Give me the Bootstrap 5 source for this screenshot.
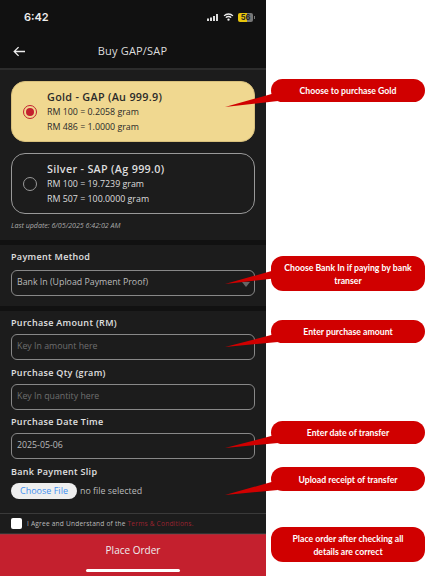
<!DOCTYPE html>
<html lang="en">
<head>
    <meta charset="UTF-8">
    <meta name="viewport" content="width=device-width, initial-scale=1.0">
    <title>Buy GAP/SAP</title>
    <link href="https://cdn.jsdelivr.net/npm/bootstrap@5.3.0/dist/css/bootstrap.min.css" rel="stylesheet">
    <style>
        html, body { height: 576px; overflow: hidden; }
        body { background: #fff; font-family: "Open Sans", sans-serif; position: relative; }

        .phone { width: 266px; height: 576px; background: #111; color: #e6e6e6; }

        .status-bar { height: 34px; padding: 0 13px 0 24px; }
        .status-time { font-size: 11px; font-weight: 600; color: #eee; font-family: Inter, sans-serif; }
        .batt { width: 15px; height: 9px; background: linear-gradient(90deg, #e8c60c 62%, #777 62%); border-radius: 2px; color: #222; font-size: 7.5px; font-weight: 700; line-height: 9px; text-align: center; font-family: Inter, sans-serif; position: relative; }
        .batt::after { content: ""; position: absolute; right: -2px; top: 3px; width: 1px; height: 3px; background: #777; }

        .app-head { height: 36px; border-bottom: 2px solid #2c2c2c; padding: 0 13px; position: relative; }
        .app-head-title { font-size: 11px; letter-spacing: .2px; color: #ddd; width: 100%; text-align: center; padding-right: 16px; padding-left: 2px; }

        .block { background: #1c1c1c; padding: 0 11px; }
        .block-rates { height: 170px; padding-top: 11px; margin-bottom: 5px; }
        .block-pay { height: 61px; padding-top: 5px; margin-bottom: 5px; }
        .block-pay .field-label { margin-bottom: 6.5px; }
        .block-form { height: 202px; padding-top: 5px; }

        .rate-box { height: 61px; border: 1px solid #999; border-radius: 14px; color: #ddd; margin-bottom: 11px; padding-left: 11px; gap: 10px; }
        .rate-on { background: #f0d890; border-color: #d8c07c; color: #2a2a2a; }
        .rate-name { font-size: 10.8px; font-weight: 600; letter-spacing: .3px; line-height: 16px; }
        .rate-line { font-size: 8.85px; line-height: 15px; }
        .radio-dot { width: 14px; height: 14px; border: 1.5px solid #999; border-radius: 50%; flex: none; }
        .rate-on .radio-dot { border-color: #c4202e; padding: 2px; }
        .radio-dot i { display: block; width: 100%; height: 100%; border-radius: 50%; background: #c4202e; }
        .update-note { font-size: 7.1px; font-style: italic; color: #aaa; margin-top: -5px; }

        .field-label { font-size: 9px; font-weight: 600; letter-spacing: .32px; color: #e0e0e0; line-height: 13px; margin: 0 0 5px; display: block; }
        .field-box { height: 26px; border: 1px solid #888; border-radius: 6px; font-size: 8.8px; padding: 0 5px; color: #bbb; margin-bottom: 5.5px; position: relative; }
        .field-hint { color: #6f6f6f; }
        .select-caret { position: absolute; right: 4px; top: 11px; width: 0; height: 0; border: 4px solid transparent; border-top: 5px solid #666; border-bottom: 0; }

        .file-row { margin-top: 3px; font-size: 8.9px; color: #bbb; gap: 3px; }
        .file-btn { background: #eee; color: #3f8fef; font-size: 9px; border-radius: 9px; width: 66px; height: 16px; line-height: 16px; text-align: center; }

        .agree-row { height: 21px; background: #1c1c1c; border-top: 1px solid #3a3a3a; border-bottom: 1px solid #333; padding-left: 11px; gap: 5px; font-size: 6.6px; letter-spacing: .2px; color: #bbb; }
        .agree-box { width: 11px; height: 11px; background: #fff; border-radius: 2px; flex: none; }
        .agree-link { color: #9a2330; }

        .order-btn { height: 42px; background: #c4202e; color: #eee; font-size: 10px; position: relative; padding-bottom: 10px; border-top: 1px solid #a5303a; }
        .home-bar { position: absolute; left: 86px; right: 86px; bottom: 4px; height: 3px; border-radius: 2px; background: #fff; }

        .tip { position: absolute; background: #d00000; color: #fff; left: 271px; width: 154px; border-radius: 12px; font-family: Lato, sans-serif; font-weight: 700; font-size: 8.7px; line-height: 13px; text-align: center; padding: 0 12px; }
        .tails { position: absolute; left: 0; top: 0; }
    </style>
</head>
<body>
    <div class="phone d-flex flex-column">
        <div class="status-bar d-flex justify-content-between align-items-center">
            <span class="status-time">6:42</span>
            <div class="d-flex align-items-center gap-1">
                <svg width="12" height="7" viewBox="0 0 12 7" fill="#ddd"><rect x="0" y="4.5" width="2" height="2.5"/><rect x="3" y="3.5" width="2" height="3.5"/><rect x="6" y="2" width="2" height="5"/><rect x="9" y="0" width="2" height="7"/></svg>
                <svg width="11" height="8" viewBox="0 0 12 9" fill="none" stroke="#eee" stroke-width="1.5"><path d="M1 3.2a7 7 0 0 1 10 0"/><path d="M3 5.2a4.2 4.2 0 0 1 6 0"/><circle cx="6" cy="7.4" r=".6" fill="#eee"/></svg>
                <div class="batt">56</div>
            </div>
        </div>
        <div class="app-head d-flex align-items-center">
            <svg class="flex-shrink-0" width="13" height="11" viewBox="0 0 14 12" fill="none" stroke="#eee" stroke-width="1.4"><path d="M13 6H1.5M6 1.2 1.2 6 6 10.8"/></svg>
            <div class="app-head-title">Buy GAP/SAP</div>
        </div>

        <div class="block block-rates">
            <div class="rate-box rate-on d-flex align-items-center">
                <div class="radio-dot"><i></i></div>
                <div>
                    <div class="rate-name">Gold - GAP (Au 999.9)</div>
                    <div class="rate-line">RM 100 = 0.2058 gram</div>
                    <div class="rate-line">RM 486 = 1.0000 gram</div>
                </div>
            </div>
            <div class="rate-box d-flex align-items-center">
                <div class="radio-dot"></div>
                <div>
                    <div class="rate-name">Silver - SAP (Ag 999.0)</div>
                    <div class="rate-line">RM 100 = 19.7239 gram</div>
                    <div class="rate-line">RM 507 = 100.0000 gram</div>
                </div>
            </div>
            <div class="update-note">Last update: 6/05/2025 6:42:02 AM</div>
        </div>

        <div class="block block-pay">
            <label class="field-label">Payment Method</label>
            <div class="field-box d-flex align-items-center">Bank In (Upload Payment Proof)<span class="select-caret"></span></div>
        </div>

        <div class="block block-form">
            <label class="field-label">Purchase Amount (RM)</label>
            <div class="field-box d-flex align-items-center field-hint">Key In amount here</div>
            <label class="field-label">Purchase Qty (gram)</label>
            <div class="field-box d-flex align-items-center field-hint">Key In quantity here</div>
            <label class="field-label">Purchase Date Time</label>
            <div class="field-box d-flex align-items-center">2025-05-06</div>
            <label class="field-label">Bank Payment Slip</label>
            <div class="file-row d-flex align-items-center">
                <span class="file-btn">Choose File</span>
                <span>no file selected</span>
            </div>
        </div>

        <div class="agree-row d-flex align-items-center">
            <span class="agree-box"></span>
            <span>I Agree and Understand of the <span class="agree-link">Terms &amp; Conditions.</span></span>
        </div>

        <div class="order-btn d-flex justify-content-center align-items-center">
            Place Order
            <div class="home-bar"></div>
        </div>
    </div>

    <!-- callouts, placed over the screenshot -->
    <svg class="tails" width="425" height="576" fill="#d00000">
        <polygon points="225,107 275,93 278,101"/>
        <polygon points="225,284 275,270 278,278"/>
        <polygon points="225,347 275,334 278,342"/>
        <polygon points="225,448 275,435 278,443"/>
        <polygon points="225,495 275,481 278,490"/>
    </svg>
    <div class="tip d-flex align-items-center justify-content-center" style="top:79px;height:23px">Choose to purchase Gold</div>
    <div class="tip d-flex align-items-center justify-content-center" style="top:256px;height:35px">Choose Bank In if paying by bank transer</div>
    <div class="tip d-flex align-items-center justify-content-center" style="top:320px;height:23px">Enter purchase amount</div>
    <div class="tip d-flex align-items-center justify-content-center" style="top:421px;height:23px">Enter date of transfer</div>
    <div class="tip d-flex align-items-center justify-content-center" style="top:467px;height:24px">Upload receipt of transfer</div>
    <div class="tip d-flex align-items-center justify-content-center" style="top:527px;height:35px">Place order after checking all details are correct</div>

    <script src="https://cdn.jsdelivr.net/npm/bootstrap@5.3.0/dist/js/bootstrap.bundle.min.js"></script>
</body>
</html>
